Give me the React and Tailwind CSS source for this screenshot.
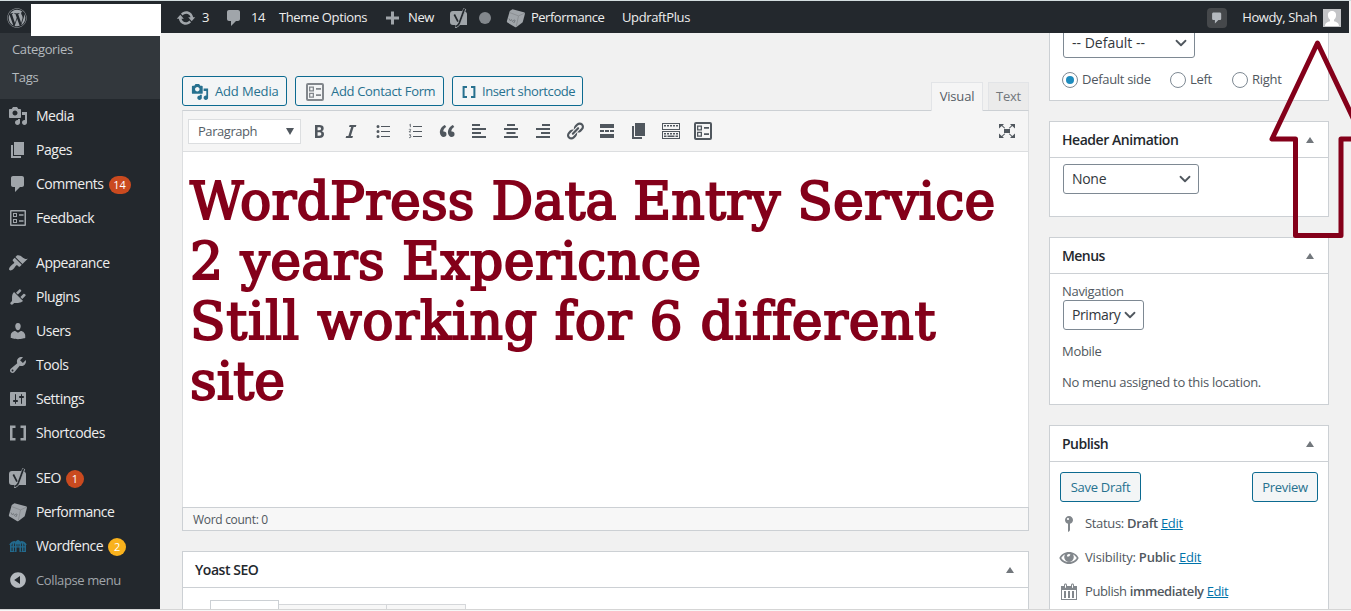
import { FaWordpress } from "react-icons/fa";
import { ChevronDown } from "lucide-react";

const ICONS = {
  media:
    "M13 11V4c0-.55-.45-1-1-1h-1.67L9 1H5L3.67 3H2c-.55 0-1 .45-1 1v7c0 .55.45 1 1 1h10c.55 0 1-.45 1-1zM7 4.5c1.38 0 2.5 1.12 2.5 2.5S8.38 9.5 7 9.5 4.5 8.38 4.5 7 5.62 4.5 7 4.5zM14 6h5v10.5c0 1.38-1.12 2.5-2.5 2.5S14 17.88 14 16.5s1.12-2.5 2.5-2.5c.17 0 .34.02.5.05V9h-3V6zm-4 8.05V13h2v3.5c0 1.38-1.12 2.5-2.5 2.5S7 17.88 7 16.5 8.12 14 9.5 14c.17 0 .34.02.5.05z",
  page: "M6 15V2h10v13H6zm-1 1h8v2H3V5h2v11z",
  comment:
    "M5 2h9c1.1 0 2 .9 2 2v7c0 1.1-.9 2-2 2h-2l-5 5v-5H5c-1.1 0-2-.9-2-2V4c0-1.1.9-2 2-2z",
  feedback:
    "M3 2h14a1 1 0 0 1 1 1v14a1 1 0 0 1-1 1H3a1 1 0 0 1-1-1V3a1 1 0 0 1 1-1zm.5 1.5v13h13v-13h-13zM5 5h4v4H5V5zm1 1v2h2V6H6zm5 .3h4.5v1.4H11V6.3zM5 11h4v4H5v-4zm1 1v2h2v-2H6zm5 .3h4.5v1.4H11v-1.4z",
  feedbackBold:
    "M3 1h14a2 2 0 0 1 2 2v14a2 2 0 0 1-2 2H3a2 2 0 0 1-2-2V3a2 2 0 0 1 2-2zm0 2v14h14V3H3zM4 4.5h5v5H4v-5zm1.3 1.3v2.4h2.4V5.8H5.3zM11 6h5v1.8h-5V6zM4 10.8h5v5H4v-5zm1.3 1.3v2.4h2.4v-2.4H5.3zM11 12.3h5v1.8h-5v-1.8z",
  appearance:
    "M14.48 11.06L7.41 3.99l1.5-1.5c.5-.56 2.3-.47 3.51.32 1.21.8 1.43 1.28 2.91 2.1 1.18.64 2.45 1.26 4.45.85zm-.71.71L6.7 4.7 4.93 6.47c-.39.39-.39 1.02 0 1.41l1.06 1.06c.39.39.39 1.03 0 1.42-.6.6-1.43 1.11-2.21 1.69-.35.26-.7.53-1.01.84C1.43 14.23.4 16.08 1.4 17.07c.99 1 2.84-.03 4.18-1.36.31-.31.58-.66.85-1.02.57-.78 1.08-1.61 1.69-2.21.39-.39 1.02-.39 1.41 0l1.06 1.06c.39.39 1.02.39 1.41 0z",
  plugins:
    "M13.11 4.36L9.87 7.6 8 5.73l3.24-3.24c.35-.34 1.05-.2 1.56.32.52.51.66 1.21.31 1.55zm-8 1.77l.91-1.12 9.01 9.01-1.19.84c-.71.71-2.63 1.16-3.82 1.16H6.14L4.9 17.26c-.59.59-1.54.59-2.12 0-.59-.58-.59-1.53 0-2.12l1.24-1.24v-3.88c0-1.13.4-3.19 1.09-3.89zm7.26 3.97l3.24-3.24c.34-.35 1.04-.21 1.55.31.52.51.66 1.21.31 1.55l-3.24 3.25z",
  users:
    "M10 9.25c-2.27 0-2.73-3.44-2.73-3.44C7 4.02 7.82 2 9.97 2c2.16 0 2.98 2.02 2.71 3.81 0 0-.41 3.44-2.68 3.44zm0 2.57L12.72 10c2.39 0 4.52 2.33 4.52 4.53v2.49s-3.65 1.13-7.24 1.13c-3.65 0-7.24-1.13-7.24-1.13v-2.49c0-2.25 1.94-4.48 4.47-4.48z",
  tools:
    "M16.68 9.77c-1.34 1.34-3.3 1.67-4.95.99l-5.41 6.52c-.99.99-2.59.99-3.58 0s-.99-2.59 0-3.57l6.52-5.42c-.68-1.65-.35-3.61.99-4.95 1.28-1.28 3.12-1.62 4.72-1.06l-2.89 2.89 2.82 2.82 2.86-2.87c.53 1.58.18 3.39-1.08 4.65zM3.81 16.21c.4.39 1.04.39 1.43 0 .4-.4.4-1.04 0-1.43-.39-.4-1.03-.4-1.43 0-.39.39-.39 1.03 0 1.43z",
  settings:
    "M18 16V4c0-.55-.45-1-1-1H3c-.55 0-1 .45-1 1v12c0 .55.45 1 1 1h14c.55 0 1-.45 1-1zM8 11h1c.55 0 1 .45 1 1s-.45 1-1 1H8v1.5c0 .28-.22.5-.5.5s-.5-.22-.5-.5V13H6c-.55 0-1-.45-1-1s.45-1 1-1h1V5.5c0-.28.22-.5.5-.5s.5.22.5.5V11zm5-2h-1c-.55 0-1-.45-1-1s.45-1 1-1h1V5.5c0-.28.22-.5.5-.5s.5.22.5.5V7h1c.55 0 1 .45 1 1s-.45 1-1 1h-1v5.5c0 .28-.22.5-.5.5s-.5-.22-.5-.5V9z",
  shortcode: "M2 2.5h5.5V5h-3v10h3v2.5H2zM18 2.5h-5.5V5h3v10h-3v2.5H18z",
  collapse:
    "M10 2.16c4.33 0 7.84 3.51 7.84 7.84s-3.51 7.84-7.84 7.84S2.16 14.33 2.16 10 5.71 2.16 10 2.16zm2 11.72V6.12L6.18 9.97z",
  update:
    "M10.2 3.28c3.53 0 6.43 2.61 6.92 6h2.08l-3.5 4-3.5-4h2.32c-.45-1.97-2.21-3.45-4.32-3.45-1.45 0-2.73.71-3.54 1.78L4.95 5.66C6.23 4.2 8.11 3.28 10.2 3.28zm-.4 13.44c-3.52 0-6.43-2.61-6.92-6H.8l3.5-4c1.17 1.33 2.33 2.67 3.5 4H5.48c.45 1.97 2.21 3.45 4.32 3.45 1.45 0 2.73-.71 3.54-1.78l1.71 1.95c-1.28 1.46-3.15 2.38-5.25 2.38z",
  plus: "M17 8.5v3h-5v5H9v-5H4v-3h5v-5h3v5h5z",
  pin: "M14 6c0 1.86-1.28 3.41-3 3.86V16c0 1-2 2-2 2V9.86c-1.72-.45-3-2-3-3.86 0-2.21 1.79-4 4-4s4 1.79 4 4zM8 5c0 .55.45 1 1 1s1-.45 1-1-.45-1-1-1-1 .45-1 1z",
  eye: "M10 4C5.5 4 2 6.5.3 10c1.7 3.5 5.2 6 9.7 6s8-2.5 9.7-6C18 6.5 14.5 4 10 4zM6 6.5a5 5 0 0 0-.8 2.6 4.8 4.8 0 0 0 9.6 0 5 5 0 0 0-.8-2.6c1.6.7 2.9 1.9 3.8 3.5-1.7 2.5-4.4 4-7.8 4s-6.1-1.5-7.8-4C3.1 8.4 4.4 7.2 6 6.5zM10 6a2 2 0 0 1 1.5.7L10 8.5H8A2 2 0 0 1 10 6z",
  calendar:
    "M15 4h3v14H2V4h3V3c0-.83.67-1.5 1.5-1.5S8 2.17 8 3v1h4V3c0-.83.67-1.5 1.5-1.5S15 2.17 15 3v1zM6 3v2.5c0 .28.22.5.5.5s.5-.22.5-.5V3c0-.28-.22-.5-.5-.5S6 2.72 6 3zm7 0v2.5c0 .28.22.5.5.5s.5-.22.5-.5V3c0-.28-.22-.5-.5-.5s-.5.22-.5.5zm4 14V8H3v9h14zM7 16V9H5v7h2zm4 0V9H9v7h2zm4 0V9h-2v7h2z",
  bold: "M6 4v13h4.54c1.37 0 2.46-.33 3.26-1 .8-.66 1.2-1.58 1.2-2.77 0-.84-.17-1.51-.51-2.01s-.9-.85-1.67-1.03v-.09c.57-.1 1.02-.4 1.36-.9s.51-1.13.51-1.91c0-1.14-.39-1.98-1.17-2.5C12.75 4.26 11.5 4 9.78 4H6zm2.57 5.15V6.26h1.36c.73 0 1.27.11 1.61.32.34.22.51.58.51 1.07 0 .54-.16.92-.47 1.15s-.82.35-1.51.35h-1.5zm0 2.19h1.6c1.44 0 2.16.53 2.16 1.61 0 .6-.17 1.05-.51 1.34s-.86.43-1.57.43H8.57v-3.38z",
  italic: "M14.78 6h-2.13l-2.8 9h2.12l-.62 2H4.6l.62-2h2.14l2.8-9H8.03l.62-2h6.75z",
  quote:
    "M9.49 13.22c0-.74-.2-1.38-.61-1.9-.62-.78-1.83-.88-2.53-.72-.29-1.65 1.11-3.75 2.92-4.65L7.88 4c-2.73 1.3-5.42 4.28-4.96 8.05C3.21 14.43 4.59 16 6.54 16c.85 0 1.56-.25 2.12-.75s.83-1.18.83-2.03zm8.05 0c0-.74-.2-1.38-.61-1.9-.63-.78-1.83-.88-2.53-.72-.29-1.65 1.11-3.75 2.92-4.65L15.93 4c-2.73 1.3-5.41 4.28-4.95 8.05.29 2.38 1.66 3.95 3.61 3.95.85 0 1.56-.25 2.12-.75s.83-1.18.83-2.03z",
  alignLeft: "M3 3h8v2H3zM3 7h14v2H3zM3 11h9v2H3zM3 15h14v2H3z",
  alignCenter: "M6 3h8v2H6zM3 7h14v2H3zM5.5 11h9v2h-9zM3 15h14v2H3z",
  alignRight: "M9 3h8v2H9zM3 7h14v2H3zM8 11h9v2H8zM3 15h14v2H3z",
  link: "M17.74 2.76c1.68 1.69 1.68 4.41 0 6.1l-1.53 1.52c-1.12 1.12-2.7 1.47-4.14 1.09l2.62-2.61.76-.77.76-.76c.84-.84.84-2.2 0-3.04-.84-.85-2.2-.85-3.04 0l-.77.76-3.38 3.38c-.37-1.44-.02-3.02 1.1-4.14l1.52-1.53c1.69-1.68 4.42-1.68 6.1 0zM8.59 13.43l5.34-5.34c.42-.42.42-1.1 0-1.52-.44-.43-1.13-.39-1.53 0l-5.33 5.34c-.42.42-.42 1.1 0 1.52.44.43 1.13.39 1.52 0zm-.76 2.29l4.14-4.15c.38 1.44.03 3.02-1.09 4.14l-1.52 1.53c-1.69 1.68-4.41 1.68-6.1 0-1.68-1.68-1.68-4.42 0-6.1l1.53-1.52c1.12-1.12 2.7-1.47 4.14-1.1l-4.14 4.15c-.85.84-.85 2.2 0 3.05.84.84 2.2.84 3.04 0z",
  bullets:
    "M6.5 5.5a1.5 1.5 0 1 1-3 0 1.5 1.5 0 0 1 3 0zM6.5 10.5a1.5 1.5 0 1 1-3 0 1.5 1.5 0 0 1 3 0zM6.5 15.5a1.5 1.5 0 1 1-3 0 1.5 1.5 0 0 1 3 0zM8 5h9v1H8zM8 10h9v1H8zM8 15h9v1H8z",
  more: "M3 3h14v4H3zM3 9h4v2H3zM8 9h4v2H8zM13 9h4v2h-4zM3 13h14v4H3z",
  kitchen:
    "M1 2h18v7H1zM2 3v5h16V3zM1 10h18v8H1zM2 11v6h16v-6zM3 4h2v1.5H3zM6 4h2v1.5H6zM9 4h2v1.5H9zM12 4h2v1.5h-2zM15 4h2v1.5h-2zM3 12h2v1.5H3zM6 12h2v1.5H6zM9 12h2v1.5H9zM12 12h2v1.5h-2zM15 12h2v1.5h-2zM3 14.5h2.5V16H3zM6.5 14.5h7V16h-7zM14.5 14.5H17V16h-2.5z",
  expand:
    "M7 8h6v4H7zM2 3h5L5.5 4.4l2.7 2.5-.8.7-2.7-2.5L2 7.5zM18 3h-5l1.5 1.4-2.7 2.5.8.7 2.7-2.5L18 7.5zM2 17h5l-1.5-1.4 2.7-2.5-.8-.7-2.7 2.5L2 12.5zM18 17h-5l1.5-1.4-2.7-2.5.8-.7 2.7 2.5L18 12.5z",
};

function Icon({ name, className = "h-5 w-5" }) {
  return (
    <svg viewBox="0 0 20 20" className={`shrink-0 ${className}`} fill="currentColor" fillRule="evenodd">
      <path d={ICONS[name]} />
    </svg>
  );
}

function NumberedList() {
  return (
    <svg viewBox="0 0 20 20" className="h-5 w-5 shrink-0" fill="none" stroke="currentColor">
      <path d="M8 5.5h9M8 10.5h9M8 15.5h9" />
      <path
        strokeWidth=".8"
        d="M4.4 4l1-.8v3M4 8.700c.3-.8 1.900-.7 1.800.2 0 .8-1.800 1.400-1.800 2h2M4 13.800h1.800L5 15c1.400 0 1.300 2-1 1.600"
      />
    </svg>
  );
}

function YoastIcon() {
  return (
    <svg viewBox="0 0 20 20" className="h-5 w-5 shrink-0">
      <path d="M4 3h9.5L9 17H4a3 3 0 0 1-3-3V6a3 3 0 0 1 3-3zM16 3.500c1.200.4 2 1.300 2 2.500v11h-7.500z" fill="#a0a5aa" />
      <path d="M15.800.6 10.300 15c-.9 2.400-2 3.600-4.300 3.700" fill="none" stroke="#a0a5aa" strokeWidth="3" />
      <path d="M5.300 6.500 9 13.600M15.500.8 10.300 15c-.9 2.200-1.900 3.200-3.900 3.400" fill="none" stroke="#23282d" strokeWidth="1.7" />
    </svg>
  );
}

// the W3 cube
function CubeIcon() {
  return (
    <svg viewBox="0 0 20 20" className="h-5 w-5 shrink-0">
      <path d="M6.500 1.200 17.800 4.300q1.400.4 1.100 1.800l-2.200 8.200-6.200 4.600q-.8.500-1.600.1L1.500 14.600q-.8-.6-.6-1.500L3.800 3z" fill="#a0a5aa" />
      <path d="m3.500 4.500 9 3.400 6-2.700M12.500 7.900l-2.200 10.500" fill="none" stroke="#85898d" strokeWidth=".8" />
      <path d="m3 10.500 1.200 2.300 1.200-1.300 1.100 2.100 1.300-1.500M7.800 12c2 0 1.500 1.200.4 1.300 1.300.4.300 1.600-1 1" fill="none" stroke="#6b7075" strokeWidth=".8" />
    </svg>
  );
}

function WordfenceIcon() {
  return (
    <svg viewBox="0 0 20 20" className="h-5 w-5 shrink-0" fill="none" stroke="#236a8d">
      <path d="M2 9q1.500-3 5-3.200M18 9q-1.500-3-5-3.200" strokeWidth="1.8" />
      <path d="M10 3.800 6.500 6v2.200h7V6z" fill="#236a8d" stroke="none" />
      <path d="M2.800 8V16M5.300 7V16M7.800 6.500V16M12.200 6.500V16M14.700 7V16M17.200 8V16" strokeWidth="1.5" />
      <path d="M2 10.800h16M2 15.500h4.500M13.500 15.500H18M10 6v4" strokeWidth="1.2" />
    </svg>
  );
}

const MENU = [
  [
    { icon: "media", label: "Media" },
    { icon: "page", label: "Pages" },
    { icon: "comment", label: "Comments", badge: "14", badgeClass: "w-[22px] bg-[#ca4a1f]" },
    { icon: "feedback", label: "Feedback" },
  ],
  [
    { icon: "appearance", label: "Appearance" },
    { icon: "plugins", label: "Plugins" },
    { icon: "users", label: "Users" },
    { icon: "tools", label: "Tools" },
    { icon: "settings", label: "Settings" },
    { icon: "shortcode", label: "Shortcodes" },
  ],
  [
    { node: <YoastIcon />, label: "SEO", badge: "1", badgeClass: "w-[18px] bg-[#ca4a1f]" },
    { node: <CubeIcon />, label: "Performance", track: "tracking-[-0.6px]" },
    { node: <WordfenceIcon />, label: "Wordfence", badge: "2", badgeClass: "w-[18px] bg-[#f9b21d]" },
  ],
];

function SideMenu() {
  return (
    <nav className="h-[576px] w-40 shrink-0 bg-[#23282d] text-sm text-[#eeeeee]">
      <div className="h-[66px] bg-[#32373c] pt-0.5 pl-3 text-[13px] tracking-[-0.35px] text-[#b4b9be]">
        <div className="flex h-7 items-center">Categories</div>
        <div className="flex h-7 items-center">Tags</div>
      </div>
      {MENU.map((group, i) => (
        <div key={i} className={i ? "pt-[11px]" : ""}>
          {group.map((item) => (
            <div key={item.label} className="flex h-[34px] items-center pl-2">
              <span className="w-7 text-[#a0a5aa]">{item.node || <Icon name={item.icon} />}</span>
              <span className={item.track || "tracking-[-0.47px]"}>{item.label}</span>
              {item.badge && (
                <span
                  className={`mt-0.5 ml-[5px] flex h-[18px] items-center justify-center rounded-full text-[11px] text-white ${item.badgeClass}`}
                >
                  {item.badge}
                </span>
              )}
            </div>
          ))}
        </div>
      ))}
      <div className="flex h-[34px] items-center pl-2 text-[13px] text-[#a0a5aa]">
        <span className="w-7 text-[#b4b9be]">
          <Icon name="collapse" />
        </span>
        <span className="tracking-[-0.38px]">Collapse menu</span>
      </div>
    </nav>
  );
}

function AdminBar() {
  return (
    <header className="flex h-8 w-[1349px] items-center bg-[#23282d] pt-px text-[13px] tracking-[-0.38px] text-[#eeeeee]">
      <FaWordpress className="ml-[7px] h-5 w-5 text-[#a0a5aa]" />
      <div className="ml-[149px] flex w-12 items-center gap-1.5">
        <Icon name="update" className="h-5 w-5 text-[#a0a5aa]" />3
      </div>
      <div className="flex w-[55px] items-center gap-[7px]">
        <Icon name="comment" className="h-5 w-5 text-[#a0a5aa]" />14
      </div>
      <div className="w-[103px]">Theme Options</div>
      <div className="flex w-[67px] items-center gap-1.5">
        <Icon name="plus" className="h-5 w-5 text-[#a0a5aa]" />New
      </div>
      <div className="flex w-[57px] items-center gap-2.5">
        <YoastIcon />
        <span className="h-3 w-3 rounded-full bg-[#82878c]" />
      </div>
      <div className="flex w-[116px] items-center gap-[5px]">
        <CubeIcon />
        <span className="tracking-[-0.5px]">Performance</span>
      </div>
      <div>UpdraftPlus</div>
      <div className="ml-auto flex h-5 w-5 items-center justify-center rounded-sm bg-[#45484b] text-[#b4b9be]">
        <Icon name="comment" className="h-3.5 w-3.5" />
      </div>
      <div className="ml-[15px]">Howdy, Shah</div>
      <div className="mr-2 ml-1.5 flex h-[18px] w-[18px] bg-[#c3c4c7]">
        <svg viewBox="0 0 18 18" className="h-[18px] w-[18px]" fill="#fff">
          <path d="M9 2c3.200 0 4.400 2.400 4 5-.2 1.800-1 3-2 3.800v1.400c2.400.6 5 1.500 5 4.800H2c0-3.300 2.600-4.200 5-4.800v-1.400C6 10 5.200 8.800 5 7c-.4-2.600.8-5 4-5z" />
        </svg>
      </div>
    </header>
  );
}

function OutlineButton({ className, children }) {
  return (
    <button
      className={`flex h-[30px] items-center rounded-[3px] border border-[#0c6a90] bg-[#f3f5f6] pt-px text-[13px] text-[#27718f] ${className}`}
    >
      {children}
    </button>
  );
}

function Select({ className, children }) {
  return (
    <div className={`flex h-[30px] items-center justify-between rounded-[3px] border border-[#7e8993] bg-white pr-1 pl-2 text-sm text-[#32373c] ${className}`}>
      {children}
      <ChevronDown className="h-[18px] w-[18px] text-[#50575e]" strokeWidth={2.4} />
    </div>
  );
}

function Radio({ checked, className, children }) {
  return (
    <label className={`flex items-center gap-1 ${className}`}>
      <span className="flex h-4 w-4 items-center justify-center rounded-full border border-[#7e8993] bg-white">
        {checked && <span className="h-2 w-2 rounded-full bg-[#1e8cbe]" />}
      </span>
      {children}
    </label>
  );
}

function PanelHeader({ className, children }) {
  return (
    <div className={`flex h-9 items-center justify-between border-b border-[#ccd0d4] pr-3.5 pl-3 text-sm font-semibold text-[#23282d] ${className}`}>
      {children}
      <svg viewBox="0 0 8 6" className="h-1.5 w-2" fill="#72777c">
        <path d="M4 0 8 6H0z" />
      </svg>
    </div>
  );
}

const TOOLS = [
  "bold", "italic", "bullets", "numbers", "quote", "alignLeft", "alignCenter",
  "alignRight", "link", "more", "page", "kitchen", "feedbackBold",
];

function Editor() {
  return (
    <main className="ml-[22px] w-[847px] shrink-0 pt-[43px]">
      <div className="flex h-[34px] justify-between">
        <div className="flex gap-2">
          <OutlineButton className="w-[105px] gap-1.5 pl-2">
            <Icon name="media" className="h-[18px] w-[18px]" />
            <span className="tracking-[-0.15px]">Add Media</span>
          </OutlineButton>
          <OutlineButton className="w-[149px] gap-1.5 pl-[9px]">
            <Icon name="feedbackBold" className="h-5 w-5 text-[#82878c]" />
            <span className="tracking-[-0.32px]">Add Contact Form</span>
          </OutlineButton>
          <OutlineButton className="w-[131px] gap-[5px] pl-2">
            <Icon name="shortcode" className="h-4 w-4" />
            <span className="tracking-[-0.4px] whitespace-nowrap">Insert shortcode</span>
          </OutlineButton>
        </div>
        <div className="relative z-10 flex gap-[5px] pt-1.5 text-[13px] tracking-[-0.2px] text-[#555d66]">
          <div className="flex h-[29px] w-[52px] items-center justify-center border border-b-0 border-[#e2e4e7] bg-[#f5f5f5]">
            Visual
          </div>
          <div className="flex h-7 w-[41px] items-center justify-center border border-b-0 border-[#e2e4e7] bg-[#ebebeb] text-[#72777c]">
            Text
          </div>
        </div>
      </div>

      <div className="h-[421px] border border-[#dcdee0] border-t-[#ccd0d4] bg-white">
        <div className="flex h-[41px] items-center border-b border-[#dcdee0] bg-[#f5f5f5] pl-[5px] text-[#50575e]">
          <div className="mr-2 flex h-[25px] w-[113px] items-center justify-between border border-[#dcdee0] bg-white pt-px pr-1.5 pl-[9px] text-[13px] tracking-[-0.45px] text-[#555d66]">
            Paragraph
            <svg viewBox="0 0 8 7" className="h-[7px] w-2" fill="#50575e">
              <path d="M0 0h8L4 7z" />
            </svg>
          </div>
          <div className="flex gap-3">
            {TOOLS.map((name) =>
              name === "numbers" ? <NumberedList key={name} /> : <Icon key={name} name={name} />,
            )}
          </div>
          <Icon name="expand" className="mr-[11px] ml-auto h-5 w-5" />
        </div>
        <div className="h-[355px] pt-[19px] pl-[7px] font-['DejaVu_Serif',serif] text-[52px] leading-[60px] whitespace-nowrap text-[#84001a] [-webkit-text-stroke:2px_#84001a] [font-variant-ligatures:none]">
          <div className="tracking-[0.15px]">WordPress Data Entry Service</div>
          <div className="tracking-[0.4px]">2 years Expericnce</div>
          <div className="tracking-[0.7px]">Still working for 6 different</div>
          <div>site</div>
        </div>
        <div className="-mx-px flex h-6 items-center border border-[#ccd0d4] bg-[#f7f7f7] pt-0.5 pl-2.5 text-xs tracking-[-0.3px] text-[#50575e]">
          Word count: 0
        </div>
      </div>

      <div className="mt-5 h-[58px] border border-b-0 border-[#ccd0d4] bg-white">
        <PanelHeader className="tracking-[-0.45px]">Yoast SEO</PanelHeader>
        <div className="flex h-[21px] items-end pl-[27px]">
          <div className="h-[9px] w-[69px] border border-b-0 border-[#ccd0d4] bg-white" />
          <div className="h-[5px] w-[108px] border-t border-r border-[#d5d7da] bg-[#f7f7f7]" />
          <div className="h-[5px] w-[79px] border-t border-r border-[#d5d7da] bg-[#f7f7f7]" />
        </div>
      </div>
    </main>
  );
}

function PublishRow({ icon, label, value, track }) {
  return (
    <div className="flex h-[34px] items-center">
      <Icon name={icon} className="h-5 w-5 text-[#82878c]" />
      <span className={`ml-1.5 ${track}`}>
        {label} <b className="font-semibold">{value}</b>{" "}
        <a className="text-[#0073aa] underline">Edit</a>
      </span>
    </div>
  );
}

function MetaBoxes() {
  return (
    <aside className="ml-5 w-[280px] shrink-0 text-[13px] tracking-[-0.3px] text-[#50575e]">
      <div className="h-[68px] overflow-hidden border border-t-0 border-[#ccd0d4] bg-white pl-[13px]">
        <Select className="-mt-[5px] w-[132px] tracking-normal">-- Default --</Select>
        <div className="-ml-px flex pt-3">
          <Radio checked className="w-[108px]">Default side</Radio>
          <Radio className="w-[62px]">Left</Radio>
          <Radio>Right</Radio>
        </div>
      </div>

      <div className="mt-5 h-24 border border-[#ccd0d4] bg-white">
        <PanelHeader className="tracking-[-0.45px]">Header Animation</PanelHeader>
        <Select className="mt-1.5 ml-[13px] w-[136px] tracking-[-0.3px]">None</Select>
      </div>

      <div className="mt-5 h-[168px] border border-[#ccd0d4] bg-white">
        <PanelHeader className="tracking-[-0.55px]">Menus</PanelHeader>
        <div className="pl-3">
          <div className="pt-2 leading-[18px]">Navigation</div>
          <Select className="ml-px w-[81px] tracking-[-0.4px]">Primary</Select>
          <div className="mt-3 leading-[18px]">Mobile</div>
          <div className="mt-[13px] leading-[18px]">No menu assigned to this location.</div>
        </div>
      </div>

      <div className="mt-5 h-[184px] border border-b-0 border-[#ccd0d4] bg-white">
        <PanelHeader className="tracking-[-0.5px]">Publish</PanelHeader>
        <div className="flex justify-between px-2.5 pt-2.5">
          <OutlineButton className="w-[81px] justify-center">Save Draft</OutlineButton>
          <OutlineButton className="w-[66px] justify-center">Preview</OutlineButton>
        </div>
        <div className="pt-[5px] pl-[9px]">
          <PublishRow icon="pin" label="Status:" value="Draft" track="tracking-[-0.33px]" />
          <PublishRow icon="eye" label="Visibility:" value="Public" track="tracking-[-0.2px]" />
          <PublishRow icon="calendar" label="Publish" value="immediately" track="tracking-[-0.4px]" />
        </div>
      </div>
    </aside>
  );
}

export default function App() {
  return (
    <div className="relative h-[611px] w-[1351px] overflow-hidden bg-[#f1f1f1] font-['Open_Sans','Noto_Sans',sans-serif]">
      <div className="flex h-[609px] flex-col overflow-hidden border-t border-[#d3dddf]">
        <AdminBar />
        <div className="flex h-[576px] overflow-hidden">
          <SideMenu />
          <Editor />
          <MetaBoxes />
        </div>
      </div>
      <div className="h-0.5 border-t border-[#d5d5d5] bg-[#f7f7f7]" />

      {/* site name cover */}
      <div className="absolute top-1 left-[31px] h-8 w-[130px] bg-white" />

      {/* arrow pointing at the account name */}
      <svg className="absolute top-0 right-0 h-[250px] w-[91px]" viewBox="1260 0 91 250" fill="none">
        <path d="M1317.5 43 1272 139h23.500v96.500h45.500V139h22z" stroke="#84001a" strokeWidth="5" strokeLinejoin="round" />
      </svg>
    </div>
  );
}
